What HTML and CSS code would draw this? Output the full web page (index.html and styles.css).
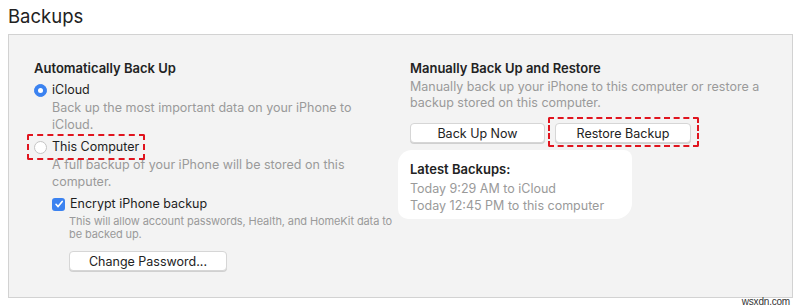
FILE: index.html
```html
<!DOCTYPE html>
<html>
<head>
<meta charset="utf-8">
<link rel="stylesheet" href="styles.css">
</head>
<body>
<h1 class="title">Backups</h1>
<div class="panel">
  <div class="col col-left">
    <div class="heading">Automatically Back Up</div>
    <div class="option option-first">
      <span class="radio radio-on"></span>
      <span class="label">iCloud</span>
    </div>
    <div class="desc indent">Back up the most important data on your iPhone to<br>iCloud.</div>
    <div class="option option-mark">
      <span class="radio"></span>
      <span class="label">This Computer</span>
      <span class="mark mark-computer"></span>
    </div>
    <div class="desc indent">A full backup of your iPhone will be stored on this<br>computer.</div>
    <div class="check-row">
      <span class="checkbox"><svg width="12" height="12" viewBox="0 0 12 12"><path d="M3 6.3 L5.1 8.6 L9.2 3.4" fill="none" stroke="#fff" stroke-width="1.6" stroke-linecap="round" stroke-linejoin="round"/></svg></span>
      <span class="label">Encrypt iPhone backup</span>
    </div>
    <div class="small indent2">This will allow account passwords, Health, and HomeKit data to<br>be backed up.</div>
    <div class="btn-row indent2">
      <span class="btn btn-pass">Change Password...</span>
    </div>
  </div>
  <div class="col col-right">
    <div class="heading">Manually Back Up and Restore</div>
    <div class="desc desc-right">Manually back up your iPhone to this computer or restore a<br>backup stored on this computer.</div>
    <div class="btns">
      <span class="btn btn-now">Back Up Now</span>
      <span class="btn-wrap"><span class="btn btn-restore">Restore Backup</span><span class="mark mark-restore"></span></span>
    </div>
    <div class="latest">
      <div class="heading heading-latest">Latest Backups:</div>
      <div class="desc">Today 9:29 AM to iCloud</div>
      <div class="desc">Today 12:45 PM to this computer</div>
    </div>
  </div>
</div>
<div class="watermark">wsxdn.com</div>
</body>
</html>
```
FILE: styles.css
```css
* { box-sizing: border-box; }
html, body { margin: 0; padding: 0; background: #ffffff; }
body {
  font-family: Inter, "Noto Sans", sans-serif;
  color: #1e1e1e;
  width: 800px;
  height: 307px;
  position: relative;
  overflow: hidden;
}
.title {
  margin: 0;
  padding: 4px 0 0 8px;
  font-size: 18.5px;
  font-weight: 400;
  line-height: 24px;
  height: 34px;
  color: #222;
}
.panel {
  margin-left: 8px;
  width: 785px;
  height: 264px;
  background: #f3f3f3;
  border: 1px solid #d2d2d2;
  display: flex;
  padding: 24px 0 0 25px;
}
.col-left { width: 376px; }
.col-right { flex: 1; }
.heading {
  font-size: 13px;
  font-weight: 600;
  line-height: 18px;
  color: #222;
}
.option {
  display: flex;
  align-items: center;
  height: 20px;
  position: relative;
}
.option-first { margin-top: 3px; }
.option-mark { margin-top: 4px; }
.radio {
  width: 13px;
  height: 13px;
  border-radius: 50%;
  border: 1px solid #c4c4c4;
  background: #fff;
  margin-right: 5px;
}
.radio-on {
  background: #3b82f0;
  border-color: #3b82f0;
  position: relative;
}
.radio-on::after {
  content: "";
  position: absolute;
  left: 3px; top: 3px;
  width: 5px; height: 5px;
  border-radius: 50%;
  background: #fff;
}
.label { font-size: 12.5px; color: #1e1e1e; line-height: 18px; }
.desc {
  font-size: 12.5px;
  color: #9a9a9a;
  line-height: 16.5px;
  white-space: nowrap;
}
.indent { padding-left: 18px; }
.check-row {
  display: flex;
  align-items: center;
  padding-left: 18px;
  margin-top: 4px;
  height: 20px;
}
.checkbox {
  width: 13px;
  height: 13px;
  border-radius: 3px;
  background: #3b82f0;
  margin-right: 5px;
  display: flex;
  align-items: center;
  justify-content: center;
}
.small {
  font-size: 11px;
  letter-spacing: -0.1px;
  color: #9a9a9a;
  line-height: 12.5px;
  margin-top: 1px;
  white-space: nowrap;
}
.indent2 { padding-left: 35px; }
.btn-row { margin-top: 11px; display: flex; }
.btn {
  display: inline-flex;
  align-items: center;
  justify-content: center;
  height: 20px;
  background: #fff;
  border: 1px solid #d6d6d6;
  border-radius: 4px;
  box-shadow: 0 1px 0 #d0d0d0;
  font-size: 12.5px;
  color: #222;
}
.btn-pass { width: 158px; }
.desc-right { line-height: 16px; margin-top: 2px; }
.btns { display: flex; gap: 10px; margin-top: 12px; align-items: center; }
.btn-now { width: 135px; }
.btn-wrap { position: relative; display: inline-flex; }
.btn-restore { width: 136px; }
.mark {
  position: absolute;
  border: 2px dashed #e0141e;
  border-radius: 2px;
}
.mark-computer { left: -7px; top: -3px; width: 118px; height: 26px; }
.mark-restore { left: -7px; top: -6px; width: 151px; height: 30px; }
.latest {
  margin-top: 7px;
  margin-left: -12px;
  width: 234px;
  padding: 10px 0 5px 12px;
  background: #ffffff;
  border-radius: 14px 8px 16px 10px;
}
.heading-latest { margin-bottom: 1.5px; }
.latest .desc { line-height: 17px; }
.watermark {
  position: absolute;
  right: 10px;
  bottom: 0px;
  font-size: 10px;
  color: #333;
  font-family: "Liberation Sans Narrow", "Liberation Sans", sans-serif;
  letter-spacing: -0.2px;
}
```
